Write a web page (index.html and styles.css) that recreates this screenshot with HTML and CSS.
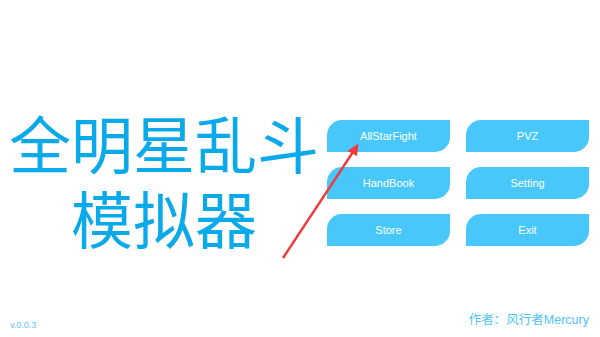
FILE: index.html
```html
<!DOCTYPE html>
<html lang="zh">
<head>
<meta charset="utf-8">
<link rel="stylesheet" href="styles.css">
</head>
<body>
<div class="page">
  <main class="main">
    <h1 class="title"><span class="line">全明星乱斗</span><span class="line">模拟器</span></h1>
    <nav class="menu">
      <button class="btn">AllStarFight</button>
      <button class="btn">PVZ</button>
      <button class="btn">HandBook</button>
      <button class="btn">Setting</button>
      <button class="btn">Store</button>
      <button class="btn">Exit</button>
    </nav>
  </main>
  <footer class="footer">
    <span class="version">v.0.0.3</span>
    <span class="author">作者：风行者Mercury</span>
  </footer>
  <svg class="arrow" width="600" height="337" viewBox="0 0 600 337">
    <line x1="283" y1="258" x2="353" y2="152" stroke="#f2383b" stroke-width="2.4"/>
    <polygon points="358.5,143.5 347.5,151 357,156" fill="#f2383b"/>
  </svg>
</div>
</body>
</html>
```
FILE: styles.css
```css
html, body {
  margin: 0;
  padding: 0;
  background: #ffffff;
}
.page {
  position: relative;
  width: 600px;
  height: 337px;
  overflow: hidden;
  display: flex;
  flex-direction: column;
  font-family: "Liberation Sans", Arial, "Noto Sans CJK SC", sans-serif;
}
.main {
  display: flex;
  flex-direction: row;
  align-items: flex-start;
  padding-top: 105px;
}
.title {
  margin: 0;
  width: 328px;
  display: flex;
  flex-direction: column;
  align-items: center;
  font-family: "Noto Sans CJK SC", sans-serif;
  font-weight: 400;
  font-size: 62px;
  line-height: 75px;
  color: #0aa9ea;
}
.line {
  display: block;
  white-space: nowrap;
}
.menu {
  margin-top: 15px;
  margin-left: -1px;
  display: grid;
  grid-template-columns: 123px 123px;
  grid-auto-rows: 32px;
  column-gap: 16px;
  row-gap: 15px;
}
.btn {
  border: none;
  margin: 0;
  padding: 0;
  background: #48c7fb;
  color: #ffffff;
  font-family: "Liberation Sans", Arial, sans-serif;
  font-size: 11px;
  border-radius: 15px 0 15px 0;
}
.footer {
  margin-top: auto;
  display: flex;
  justify-content: space-between;
  align-items: flex-end;
  padding: 0 11px 6px 10px;
}
.version {
  font-size: 9px;
  color: #5cc6f6;
  padding-bottom: 1px;
}
.author {
  font-size: 12.5px;
  color: #4fc2f6;
  padding-bottom: 3px;
}
.arrow {
  position: absolute;
  left: 0;
  top: 0;
  pointer-events: none;
}
```
